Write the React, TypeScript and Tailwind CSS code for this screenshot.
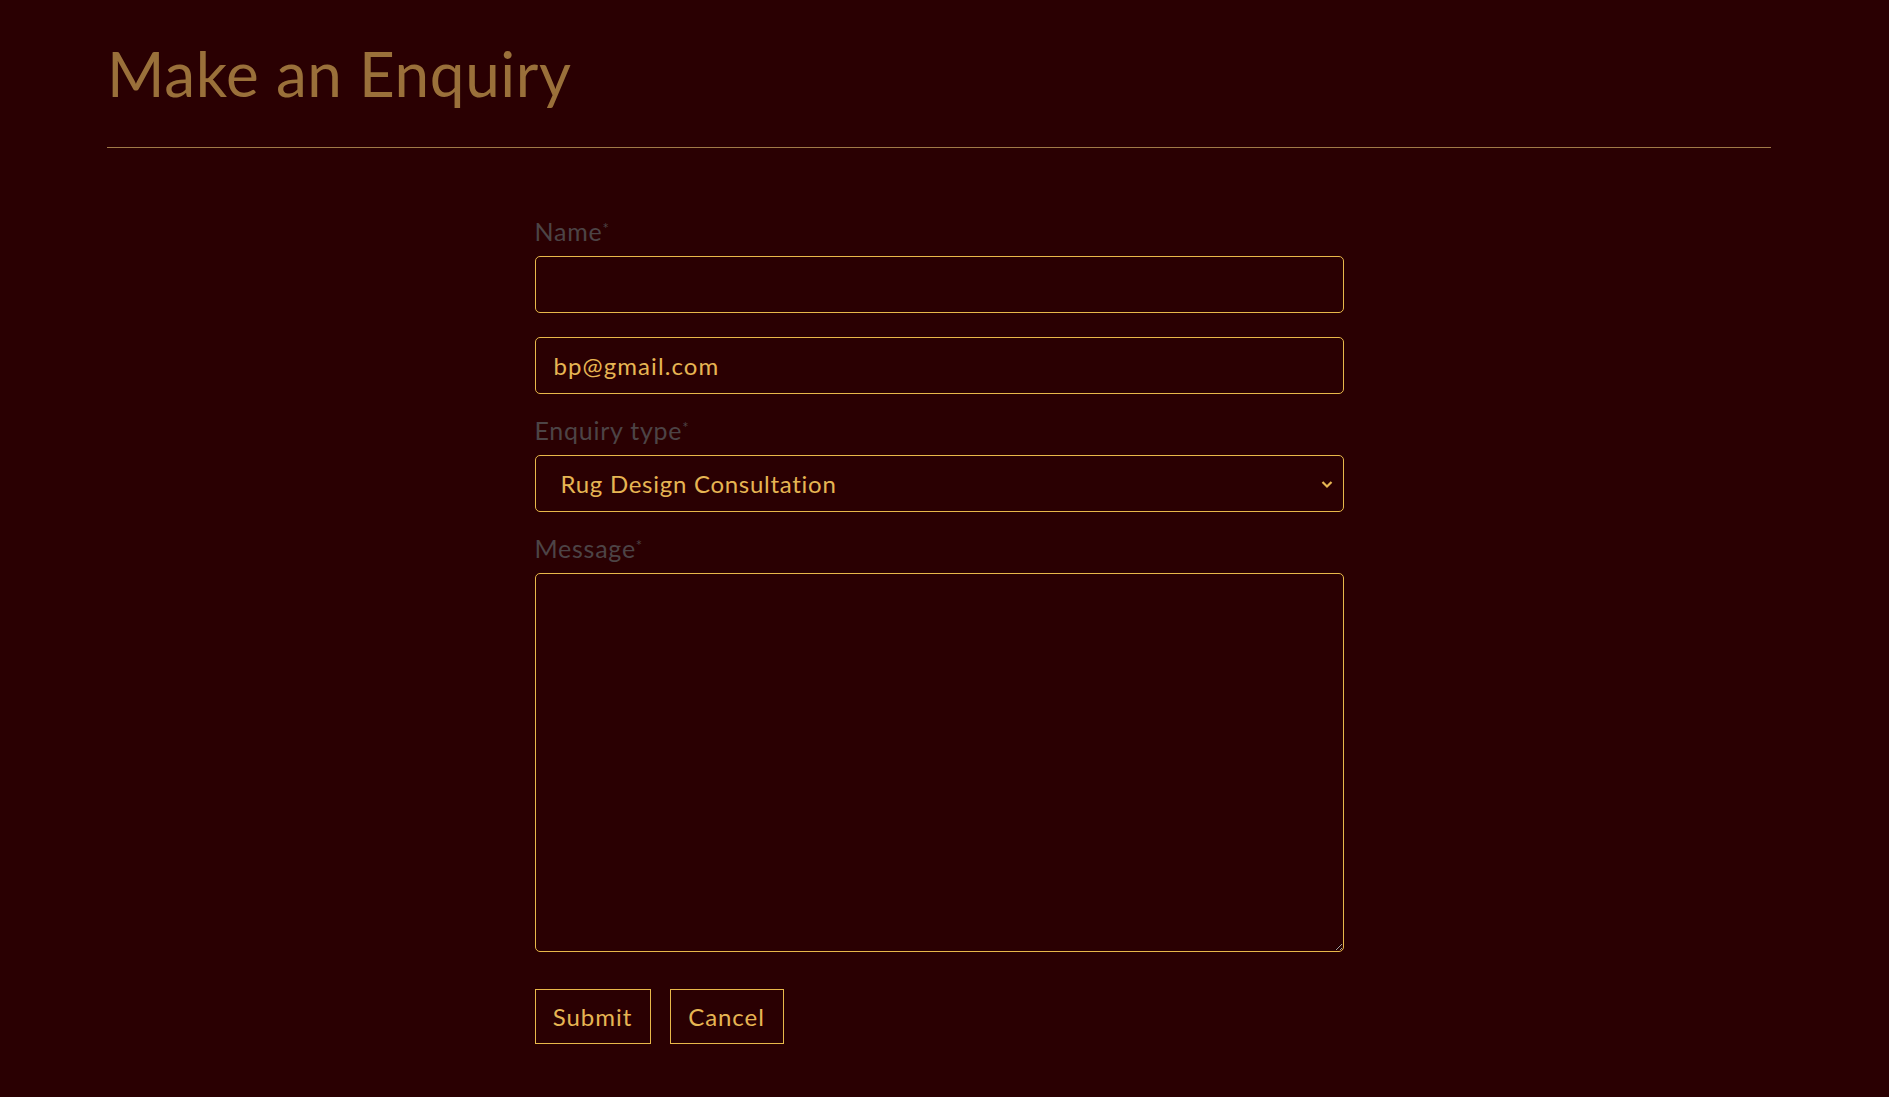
import React, { useState } from "react";

const font = { fontFamily: "Lato, 'Open Sans', sans-serif" };

const App: React.FC = () => {
  const [email, setEmail] = useState("bp@gmail.com");

  return (
    <div className="min-h-screen bg-[#2a0002] pl-[107px] pr-[118px]" style={font}>
      {/* Heading */}
      <h1 className="pt-[33px] pb-[34px] text-[62px] leading-[80px] tracking-[0.01em] text-[#9a703a]">
        Make an Enquiry
      </h1>
      <div className="h-px bg-[#a07a48]" />

      <form className="mx-auto w-[809px] pt-[69px] pb-[55px] flex flex-col">
        <label className="text-[25px] leading-[28px] tracking-[0.03em] text-[#4d4446] mb-[11px]">
          Name<sup className="text-[15px]">*</sup>
        </label>
        <input
          type="text"
          className="h-[57px] rounded-[5px] border border-[#e8b84a] bg-transparent px-[18px] text-[24px] tracking-[0.04em] text-[#e6b553] outline-none"
        />

        <input
          type="email"
          value={email}
          onChange={(e) => setEmail(e.target.value)}
          className="mt-[24px] h-[57px] rounded-[5px] border border-[#e8b84a] bg-transparent px-[18px] text-[24px] tracking-[0.045em] text-[#e6b553] outline-none"
        />

        <label className="mt-[22px] text-[25px] leading-[28px] tracking-[0.03em] text-[#4d4446] mb-[11px]">
          Enquiry type<sup className="text-[15px]">*</sup>
        </label>
        {/* Select */}
        <div className="relative h-[57px] rounded-[5px] border border-[#e8b84a] flex items-center pl-[25px] pr-[9px]">
          <span className="flex-1 text-[24px] tracking-[0.03em] text-[#e6b553]">Rug Design Consultation</span>
          <svg width="14" height="14" viewBox="0 0 14 14" className="text-[#e6b553]">
            <path d="M2.5 5l4.5 4.5L11.5 5" fill="none" stroke="currentColor" strokeWidth="2.2" />
          </svg>
        </div>

        <label className="mt-[22px] text-[25px] leading-[28px] tracking-[0.03em] text-[#4d4446] mb-[11px]">
          Message<sup className="text-[15px]">*</sup>
        </label>
        <textarea className="h-[379px] rounded-[5px] border border-[#e8b84a] bg-transparent px-[18px] py-[12px] text-[24px] text-[#e6b553] outline-none resize-y" />

        {/* Buttons */}
        <div className="mt-[37px] flex gap-[19px]">
          <button
            type="button"
            className="h-[55px] w-[116px] border border-[#e8b84a] text-[24px] tracking-[0.04em] text-[#e6b553]"
          >
            Submit
          </button>
          <button
            type="button"
            className="h-[55px] w-[114px] border border-[#e8b84a] text-[24px] tracking-[0.04em] text-[#e6b553]"
          >
            Cancel
          </button>
        </div>
      </form>
    </div>
  );
};

export default App;
